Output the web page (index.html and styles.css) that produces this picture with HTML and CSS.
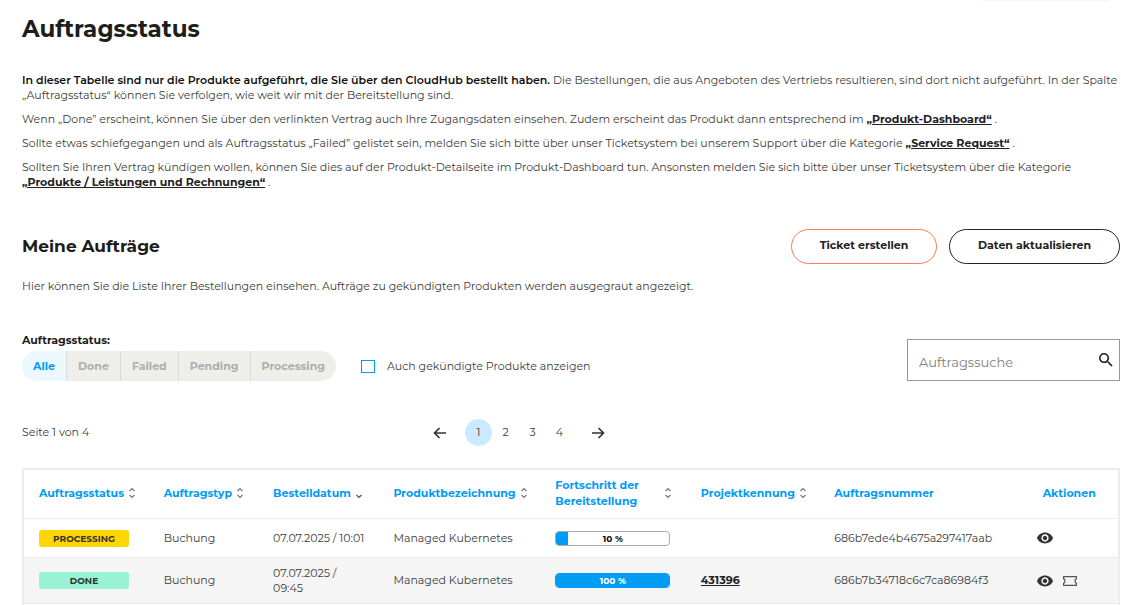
FILE: index.html
```html
<!DOCTYPE html>
<html lang="de">
<head>
<meta charset="utf-8">
<title>Auftragsstatus</title>
<link rel="stylesheet" href="styles.css">
</head>
<body>
<svg class="sprite" aria-hidden="true">
  <symbol id="sort" viewBox="0 0 8 12"><path d="M1.500 4L4 1.500 6.500 4M1.500 8L4 10.500 6.500 8" fill="none" stroke="#777" stroke-width="1.2"/></symbol>
  <symbol id="sort-down" viewBox="0 0 8 12"><path d="M1.500 8L4 10.500 6.500 8" fill="none" stroke="#555" stroke-width="1.2"/></symbol>
  <symbol id="eye" viewBox="1 4 22 16"><path fill="#333" d="M12 4.500C7 4.500 2.730 7.610 1 12c1.730 4.390 6 7.500 11 7.500s9.270-3.110 11-7.500c-1.730-4.390-6-7.500-11-7.500zM12 17c-2.760 0-5-2.240-5-5s2.240-5 5-5 5 2.240 5 5-2.240 5-5 5zm0-8c-1.660 0-3 1.340-3 3s1.340 3 3 3 3-1.340 3-3-1.340-3-3-3z"/></symbol>
  <symbol id="ticket" viewBox="0 0 14 10"><path d="M.6.7h12.800v2.100l-1.200.7v3l1.200.7v2.100H.6V7.200l1.200-.7v-3L.6 2.800z" fill="none" stroke="#555" stroke-width="1.200"/></symbol>
</svg>
<div class="page">
  <div class="topbar"><span class="topbar-pill"></span></div>
  <h1 class="title">Auftragsstatus</h1>
  <section class="intro">
    <p><strong>In dieser Tabelle sind nur die Produkte aufgeführt, die Sie über den CloudHub bestellt haben.</strong> Die Bestellungen, die aus Angeboten des Vertriebs resultieren, sind dort nicht aufgeführt. In der Spalte „Auftragsstatus“ können Sie verfolgen, wie weit wir mit der Bereitstellung sind.</p>
    <p>Wenn „Done” erscheint, können Sie über den verlinkten Vertrag auch Ihre Zugangsdaten einsehen. Zudem erscheint das Produkt dann entsprechend im <a href="#">„Produkt-Dashboard“</a> .</p>
    <p>Sollte etwas schiefgegangen und als Auftragsstatus „Failed” gelistet sein, melden Sie sich bitte über unser Ticketsystem bei unserem Support über die Kategorie <a href="#">„Service Request“</a> .</p>
    <p>Sollten Sie Ihren Vertrag kündigen wollen, können Sie dies auf der Produkt-Detailseite im Produkt-Dashboard tun. Ansonsten melden Sie sich bitte über unser Ticketsystem über die Kategorie <br><a href="#">„Produkte / Leistungen und Rechnungen“</a> .</p>
  </section>
  <div class="section-head">
    <h2 class="subtitle">Meine Aufträge</h2>
    <button class="pill pill-accent" type="button">Ticket erstellen</button>
    <button class="pill" type="button">Daten aktualisieren</button>
  </div>
  <p class="hint">Hier können Sie die Liste Ihrer Bestellungen einsehen. Aufträge zu gekündigten Produkten werden ausgegraut angezeigt.</p>
  <div class="toolbar">
    <div class="filter">
      <div class="filter-label" id="filter-label">Auftragsstatus:</div>
      <div class="segments" role="group" aria-labelledby="filter-label">
        <button class="segment active" type="button">Alle</button>
        <button class="segment" type="button">Done</button>
        <button class="segment" type="button">Failed</button>
        <button class="segment" type="button">Pending</button>
        <button class="segment" type="button">Processing</button>
      </div>
    </div>
    <label class="check"><input type="checkbox">Auch gekündigte Produkte anzeigen</label>
    <div class="search">
      <input type="text" placeholder="Auftragssuche" aria-label="Auftragssuche">
      <svg class="search-icon" viewBox="3 3 18 18"><path fill="#222" d="M15.500 14h-.79l-.28-.27A6.471 6.471 0 0 0 16 9.500 6.500 6.500 0 1 0 9.500 16c1.610 0 3.090-.59 4.230-1.570l.27.28v.79l5 4.990L20.490 19l-4.990-5zm-6 0C7.010 14 5 11.990 5 9.500S7.010 5 9.500 5 14 7.010 14 9.500 11.990 14 9.500 14z"/></svg>
    </div>
  </div>
  <div class="paging">
    <span>Seite 1 von 4</span>
    <nav class="pages" aria-label="Seiten">
      <button class="arrow prev" type="button" aria-label="Zurück"><svg viewBox="0 0 13 12"><path d="M6.500 1L1.500 6l5 5M1.500 6H13" fill="none" stroke="#333" stroke-width="1.700"/></svg></button>
      <button class="num current" type="button">1</button>
      <button class="num" type="button">2</button>
      <button class="num" type="button">3</button>
      <button class="num" type="button">4</button>
      <button class="arrow next" type="button" aria-label="Weiter"><svg viewBox="0 0 13 12"><path d="M6.500 1l5 5-5 5M11.500 6H0" fill="none" stroke="#333" stroke-width="1.700"/></svg></button>
    </nav>
    <span></span>
  </div>
  <div class="table-box">
    <table class="orders">
      <colgroup><col class="c-status"><col class="c-type"><col class="c-date"><col class="c-product"><col class="c-progress"><col class="c-project"><col class="c-number"><col></colgroup>
      <thead>
        <tr>
          <th><div class="head">Auftragsstatus<svg><use href="#sort"/></svg></div></th>
          <th><div class="head">Auftragstyp<svg><use href="#sort"/></svg></div></th>
          <th><div class="head">Bestelldatum<svg><use href="#sort-down"/></svg></div></th>
          <th><div class="head">Produktbezeichnung<svg><use href="#sort"/></svg></div></th>
          <th><div class="head spread"><span>Fortschritt der<br>Bereitstellung</span><svg><use href="#sort"/></svg></div></th>
          <th><div class="head">Projektkennung<svg><use href="#sort"/></svg></div></th>
          <th>Auftragsnummer</th>
          <th class="actions-head">Aktionen</th>
        </tr>
      </thead>
      <tbody>
        <tr class="row-short">
          <td><span class="badge processing">PROCESSING</span></td>
          <td>Buchung</td>
          <td>07.07.2025 / 10:01</td>
          <td>Managed Kubernetes</td>
          <td><div class="progress"><span class="fill" style="width:10%"></span><span class="value">10 %</span></div></td>
          <td></td>
          <td>686b7ede4b4675a297417aab</td>
          <td><div class="actions"><button type="button" aria-label="Ansehen"><svg class="eye"><use href="#eye"/></svg></button></div></td>
        </tr>
        <tr class="row-tall">
          <td><span class="badge done">DONE</span></td>
          <td>Buchung</td>
          <td>07.07.2025 /<br>09:45</td>
          <td>Managed Kubernetes</td>
          <td><div class="progress full"><span class="fill" style="width:100%"></span><span class="value">100 %</span></div></td>
          <td><a href="#">431396</a></td>
          <td>686b7b34718c6c7ca86984f3</td>
          <td><div class="actions"><button type="button" aria-label="Ansehen"><svg class="eye"><use href="#eye"/></svg></button><button type="button" aria-label="Ticket"><svg class="ticket"><use href="#ticket"/></svg></button></div></td>
        </tr>
      </tbody>
    </table>
  </div>
</div>
</body>
</html>
```
FILE: styles.css
```css
* { box-sizing: border-box; }
body {
  margin: 0;
  background: #fff;
  color: #3c3c3b;
  font: 11px/15px Montserrat, Inter, "Open Sans", sans-serif;
}
button, input { font: inherit; color: inherit; }
button { cursor: pointer; }
a { color: #222; font-weight: 700; text-decoration: underline; }
.sprite { position: absolute; width: 0; height: 0; }
.page { padding: 0 1px 0 22px; }
.topbar { display: flex; justify-content: flex-end; height: 1px; padding-right: 11px; }
.topbar-pill { width: 125px; background: #ebf8ff; }
.title { margin: 13px 0 0; font-size: 23px; line-height: 30px; font-weight: 700; color: #1d1d1b; }
.intro { padding-top: 29px; }
.intro p { margin: 0 0 9px; }
.intro strong { color: #111; font-weight: 600; }
.section-head { display: flex; align-items: center; gap: 12px; margin-top: 39px; }
.subtitle { flex: 1; margin: 0; padding-bottom: 2px; font-size: 17px; line-height: 24px; font-weight: 700; color: #1d1d1b; }
.pill {
  height: 35px;
  width: 171px;
  padding: 0 0 2px;
  border: 1px solid #222;
  border-radius: 18px;
  background: #fff;
  color: #222;
  font-weight: 700;
}
.pill-accent { width: 146px; border-color: #ff7f50; }
.hint { margin: 15px 0 0; }
.toolbar { display: flex; margin-top: 39px; }
.filter-label { padding-bottom: 3px; font-weight: 700; color: #1d1d1b; }
.segments { display: flex; height: 30px; border-radius: 15px; overflow: hidden; }
.segment {
  padding: 0 11px;
  border: 0;
  border-right: 1px solid #dcdcdc;
  background: #eeefeb;
  color: #aeaeae;
  font-weight: 700;
}
.segment:last-child { border-right: 0; }
.segment.active { background: #ebf9ff; color: #009bf5; }
.check { display: flex; align-items: center; align-self: flex-end; gap: 12px; height: 30px; margin-left: 25px; }
.check input { appearance: none; width: 14px; height: 13px; margin: 0; border: 1px solid #009bf5; background: #fff; }
.search {
  display: flex;
  align-items: center;
  width: 213px;
  height: 42px;
  margin: 6px 0 0 auto;
  padding: 0 6px 0 11px;
  border: 1px solid #999;
}
.search input { flex: 1; min-width: 0; height: 40px; padding: 4px 0 0; border: 0; outline: 0; background: none; font-size: 13px; }
.search input::placeholder { color: #808080; opacity: 1; }
.search-icon { width: 14px; height: 14px; }
.paging { display: grid; grid-template-columns: 1fr auto 1fr; align-items: center; margin-top: 38px; }
.pages { display: flex; align-items: center; padding-right: 104px; }
.pages button { border: 0; background: none; padding: 0; }
.pages .num { width: 27px; height: 27px; border-radius: 50%; }
.pages .current { background: #cceaff; }
.arrow { height: 27px; width: 13px; }
.arrow svg { display: block; width: 13px; height: 12px; }
.prev { margin-right: 19px; }
.next { margin-left: 19px; }
.table-box { margin-top: 22px; padding-bottom: 1px; border: 2px solid #e9eded; border-bottom: 0; }
.orders { width: 100%; table-layout: fixed; border-collapse: separate; border-spacing: 0; }
.orders th, .orders td { padding: 0 0 0 15px; border-bottom: 1px solid #e9eded; text-align: left; white-space: nowrap; }
.orders th { height: 49px; padding-bottom: 2px; color: #009bf5; line-height: 16px; font-weight: 700; }
.row-short td { height: 39px; }
.row-tall td { height: 46px; background: #f5f5f5; }
.c-status { width: 11.400%; }
.c-type { width: 10%; }
.c-date { width: 11%; }
.c-product { width: 14.800%; }
.c-progress { width: 13.300%; }
.c-project { width: 12.200%; }
.c-number { width: 18.500%; }
.head { display: flex; align-items: center; gap: 4px; }
.head svg { flex: none; width: 8px; height: 12px; }
.spread { justify-content: space-between; padding-right: 14px; }
.orders .actions-head { padding-left: 21px; }
.badge {
  display: block;
  width: 90px;
  border-radius: 3px;
  color: #333;
  font-size: 9px;
  line-height: 17px;
  font-weight: 700;
  text-align: center;
}
.processing { background: #ffd600; }
.done { background: #99f2d4; }
.progress {
  display: grid;
  width: 115px;
  height: 15px;
  border: 1px solid #aaa;
  border-radius: 4px;
  overflow: hidden;
  color: #111;
  font-size: 9px;
  line-height: 14px;
  font-weight: 700;
  text-align: center;
}
.progress span { grid-area: 1 / 1; }
.fill { height: 13px; background: #009bf5; }
.full { border-color: #009bf5; color: #fff; }
.actions { display: flex; align-items: center; gap: 10px; }
.actions button { display: flex; padding: 0; border: 0; background: none; }
.eye { width: 16px; height: 12px; }
.ticket { width: 14px; height: 10px; }
```
